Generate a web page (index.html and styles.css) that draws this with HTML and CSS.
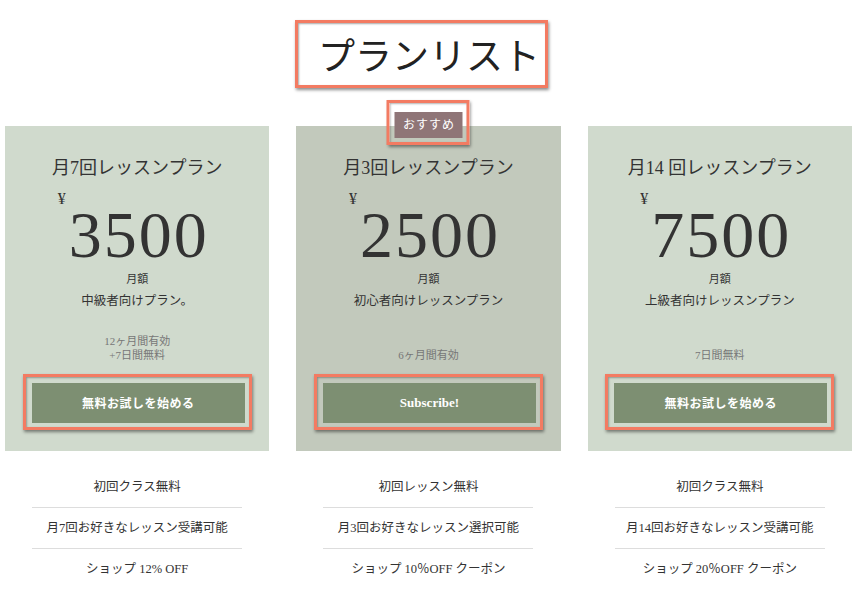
FILE: index.html
```html
<!DOCTYPE html>
<html lang="ja">
<head>
    <meta charset="UTF-8">
    <meta name="viewport" content="width=device-width, initial-scale=1.0">
    <title>プランリスト</title>
    <link rel="stylesheet" href="styles.css">
</head>
<body>
    <header class="page-header">
        <h1 class="page-title">プランリスト</h1>
    </header>

    <div class="plans">
        <!-- 月7回 -->
        <div class="plan">
            <div class="plan-card">
                <h2 class="plan-name">月7回レッスンプラン</h2>
                <div class="plan-price">
                    <span class="yen">¥</span>
                    <span class="amount">3500</span>
                </div>
                <div class="per-month">月額</div>
                <p class="plan-desc">中級者向けプラン。</p>
                <div class="plan-notes">
                    <p>12ヶ月間有効</p>
                    <p>+7日間無料</p>
                </div>
                <div class="btn-frame">
                    <button class="plan-btn">無料お試しを始める</button>
                </div>
            </div>
            <ul class="plan-features">
                <li>初回クラス無料</li>
                <li>月7回お好きなレッスン受講可能</li>
                <li>ショップ 12% OFF</li>
            </ul>
        </div>

        <!-- 月3回 (おすすめ) -->
        <div class="plan">
            <div class="plan-card featured">
                <div class="badge-frame">
                    <span class="badge">おすすめ</span>
                </div>
                <h2 class="plan-name">月3回レッスンプラン</h2>
                <div class="plan-price">
                    <span class="yen">¥</span>
                    <span class="amount">2500</span>
                </div>
                <div class="per-month">月額</div>
                <p class="plan-desc">初心者向けレッスンプラン</p>
                <div class="plan-notes">
                    <p>6ヶ月間有効</p>
                </div>
                <div class="btn-frame">
                    <button class="plan-btn latin">Subscribe!</button>
                </div>
            </div>
            <ul class="plan-features">
                <li>初回レッスン無料</li>
                <li>月3回お好きなレッスン選択可能</li>
                <li>ショップ 10％OFF クーポン</li>
            </ul>
        </div>

        <!-- 月14回 -->
        <div class="plan">
            <div class="plan-card">
                <h2 class="plan-name">月14 回レッスンプラン</h2>
                <div class="plan-price">
                    <span class="yen">¥</span>
                    <span class="amount">7500</span>
                </div>
                <div class="per-month">月額</div>
                <p class="plan-desc">上級者向けレッスンプラン</p>
                <div class="plan-notes">
                    <p>7日間無料</p>
                </div>
                <div class="btn-frame">
                    <button class="plan-btn">無料お試しを始める</button>
                </div>
            </div>
            <ul class="plan-features">
                <li>初回クラス無料</li>
                <li>月14回お好きなレッスン受講可能</li>
                <li>ショップ 20％OFF クーポン</li>
            </ul>
        </div>
    </div>
</body>
</html>
```

FILE: styles.css
```css
:root {
    --card-bg: #d0dacd;
    --card-featured: #c2c9bc;
    --btn-green: #7d8f72;
    --badge-bg: #8f7577;
    --marker: #f37b62;
    --text-dark: #333333;
    --text-muted: #777777;
    --line: #dddddd;
}

* {
    margin: 0;
    padding: 0;
    box-sizing: border-box;
}

body {
    background-color: #ffffff;
    color: var(--text-dark);
    font-family: 'Liberation Serif', 'Noto Sans CJK JP', serif;
    width: 855px;
}

.page-header {
    display: flex;
    padding: 20px 0 0 295px;
}

.page-title {
    width: 253px;
    height: 68px;
    padding-left: 20px;
    display: flex;
    align-items: center;
    white-space: nowrap;
    border: 3px solid var(--marker);
    box-shadow: 1px 2px 3px rgba(0, 0, 0, 0.45), inset 1px 1px 2px rgba(0, 0, 0, 0.35);
    font-family: 'Noto Sans CJK JP', sans-serif;
    font-size: 37px;
    font-weight: 400;
    color: #222;
}

.plans {
    display: grid;
    grid-template-columns: repeat(3, 1fr);
    gap: 27px;
    padding: 0 3px 0 5px;
    margin-top: 38px;
}

.plan-card {
    position: relative;
    height: 325px;
    background-color: var(--card-bg);
    padding: 29px 16px 21px 16px;
    display: flex;
    flex-direction: column;
    align-items: center;
    text-align: center;
}

.plan-card.featured {
    background-color: var(--card-featured);
}

.badge-frame {
    position: absolute;
    top: -26px;
    left: 50%;
    transform: translateX(-50%);
    padding: 9px 4px 4px 5px;
    border: 3px solid var(--marker);
    box-shadow: 1px 2px 3px rgba(0, 0, 0, 0.45), inset 1px 1px 2px rgba(0, 0, 0, 0.3);
}

.badge {
    display: block;
    width: 68px;
    height: 26px;
    line-height: 26px;
    background-color: var(--badge-bg);
    color: #fff;
    font-size: 12px;
    letter-spacing: 1px;
}

.plan-name {
    font-size: 18px;
    font-weight: 400;
    line-height: 26px;
}

.plan-price {
    display: flex;
    align-items: flex-start;
    margin-top: 8px;
    margin-left: -8px;
}

.yen {
    font-size: 16px;
    line-height: 20px;
    margin-right: 3px;
}

.amount {
    font-size: 66px;
    line-height: normal;
    margin-top: 8px;
    letter-spacing: 2px;
}

.per-month {
    font-size: 11px;
    line-height: 12px;
}

.plan-desc {
    font-size: 12.5px;
    line-height: 20px;
    margin-top: 6px;
}

.plan-notes {
    margin-top: auto;
    font-size: 11px;
    line-height: 14px;
    color: var(--text-muted);
}

.btn-frame {
    width: 229px;
    margin-top: 12px;
    padding: 6px 4px 4px 6px;
    border: 3px solid var(--marker);
    box-shadow: 1px 2px 3px rgba(0, 0, 0, 0.45), inset 1px 1px 2px rgba(0, 0, 0, 0.3);
}

.plan-btn {
    display: block;
    width: 100%;
    height: 40px;
    background-color: var(--btn-green);
    color: #fff;
    border: none;
    font-family: 'Liberation Serif', 'Noto Sans CJK JP', serif;
    font-size: 12px;
    font-weight: 700;
    letter-spacing: 0.5px;
    cursor: pointer;
}

.plan-btn.latin {
    font-size: 13px;
    letter-spacing: 0;
}

.plan-features {
    list-style: none;
    width: 210px;
    margin: 16px auto 0 auto;
    text-align: center;
}

.plan-features li {
    height: 41px;
    line-height: 40px;
    font-size: 12.5px;
    border-bottom: 1px solid var(--line);
}

.plan-features li:last-child {
    border-bottom: none;
}
```
